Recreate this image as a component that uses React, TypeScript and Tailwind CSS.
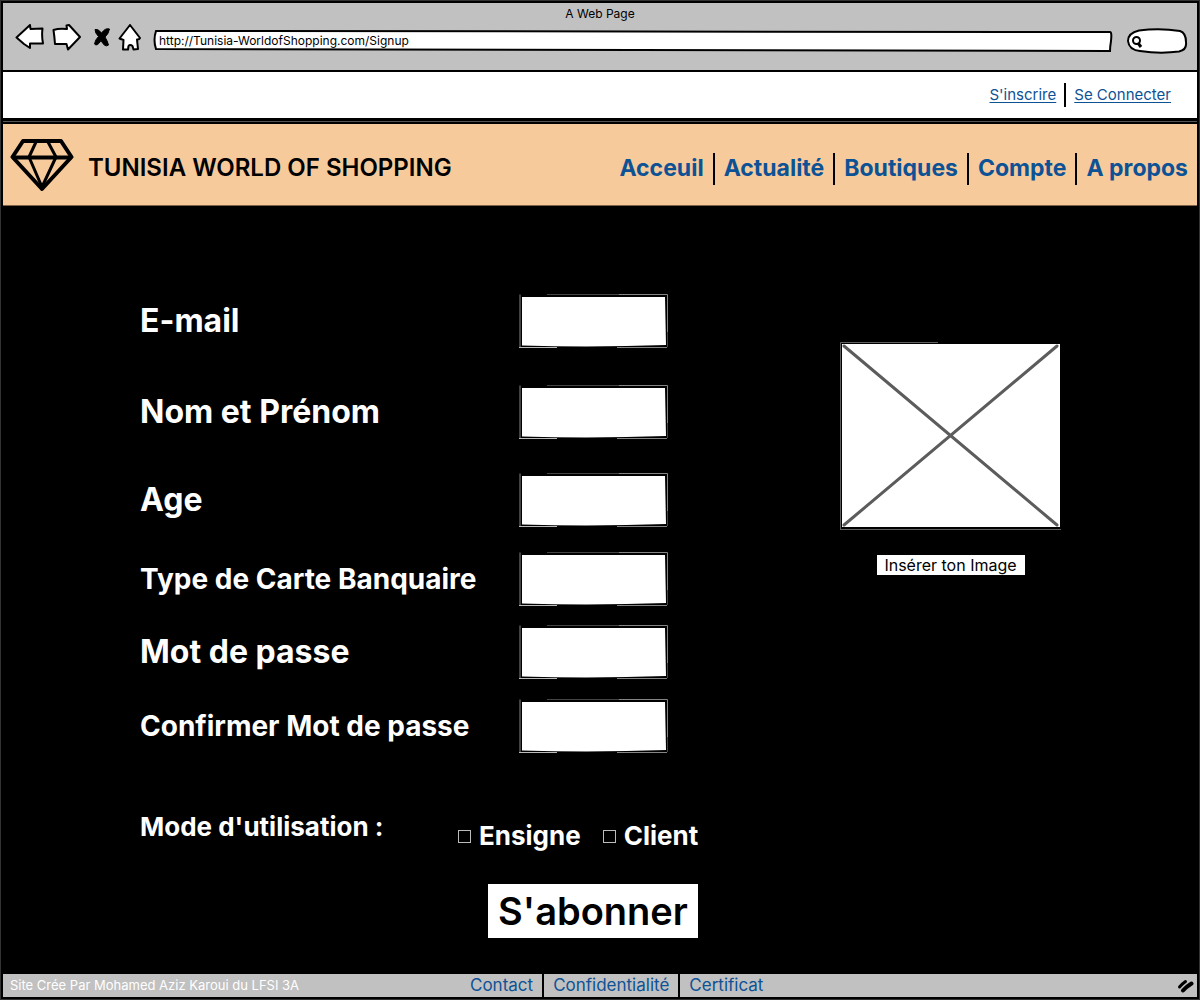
import type { ReactNode } from "react";

const navLinks = ["Acceuil", "Actualité", "Boutiques", "Compte", "A propos"];
const footerLinks = ["Contact", "Confidentialité", "Certificat"];

const fields = [
  { id: "email", label: "E-mail", type: "email", row: "mb-[38px] text-[32px]" },
  { id: "name", label: "Nom et Prénom", type: "text", row: "mb-[35px] text-[32px]" },
  { id: "age", label: "Age", type: "text", row: "mb-[26px] text-[32px]" },
  { id: "card", label: "Type de Carte Banquaire", type: "text", row: "mb-5 text-[28px]" },
  { id: "password", label: "Mot de passe", type: "password", row: "mb-[21px] text-[32px]" },
  { id: "confirm", label: "Confirmer Mot de passe", type: "password", row: "text-[28px]" },
];

function LeftArrow() {
  return (
    <svg width="30" height="28" viewBox="0 0 30 28" fill="white" stroke="black" strokeWidth="2" strokeLinejoin="round" aria-hidden="true">
      <path d="M1.500 13.500 L15 1 L15.500 5 L27.500 4.500 Q26.500 12 28 19.500 L15 19.500 L15 24 L9 20 Z" />
    </svg>
  );
}

function RightArrow() {
  return (
    <svg width="30" height="28" viewBox="0 0 30 28" fill="white" stroke="black" strokeWidth="2" strokeLinejoin="round" aria-hidden="true">
      <path d="M1.500 6 Q7 4 15 5 L14.500 1.500 L17 1 L28 13 L16 25.500 L14.500 20 L3 20 Q2.500 13 1.500 6 Z" />
    </svg>
  );
}

function Cross() {
  return (
    <svg width="18" height="20" viewBox="0 0 18 20" fill="black" stroke="black" strokeWidth="1" strokeLinejoin="round" aria-hidden="true">
      <path d="M2 1.500 Q5 .5 8.500 5 Q12.500 -.5 16.500 1 Q15.500 6 12 9 Q14.500 13 15.500 17 Q12 20 8 12.500 Q4 19 1.500 16 Q2 12 5.500 8.500 Q2 5 2 1.500 Z" />
    </svg>
  );
}

function Home() {
  return (
    <svg width="24" height="28" viewBox="0 0 24 28" fill="white" stroke="black" strokeWidth="2" strokeLinejoin="round" aria-hidden="true">
      <path d="M12 1 L22 14 Q21 16 19 15.500 L20 25 L15.500 25.500 L14.500 22 Q12 20 10.500 22 L10 25.500 L5 25.500 L5.500 16 L1.500 14.500 Z" />
    </svg>
  );
}

function Diamond() {
  return (
    <svg width="64" height="54" viewBox="0 0 64 54" fill="none" stroke="black" strokeWidth="4" strokeLinejoin="round" aria-hidden="true">
      <path d="M13 3 H51 L61.500 19 L32 51 L2.500 19 Z" />
      <path d="M2.500 19.500 H61.500" />
      <path d="M26 4 L19 19 L32 49 L46 19 L38 4" strokeWidth="3" />
    </svg>
  );
}

function Slashes() {
  return (
    <svg width="18" height="14" viewBox="0 0 18 14" fill="none" stroke="black" strokeLinecap="round" aria-hidden="true">
      <path d="M2.500 8 Q5 5 8.500 2.500" strokeWidth="3" />
      <path d="M6 11.500 Q9 8 14.500 4.500" strokeWidth="4" />
    </svg>
  );
}

function FieldFrame() {
  return (
    <svg className="absolute inset-0 h-full w-full" viewBox="0 0 149 54" preserveAspectRatio="none" aria-hidden="true">
      <path d="M3 3 L146 3 L147 51 Q75 53.500 3 51.500 Z" fill="white" />
      <g fill="none" stroke="#858585">
        <path d="M1 .5 V53.500" />
        <path d="M28 .5 H110" stroke="#444444" />
        <path d="M100 .5 H148.500 V38" />
        <path d="M148.500 38 V53" stroke="#444444" />
        <path d="M0 53.500 H38" stroke="#bbbbbb" />
        <path d="M98 53.500 H148" />
      </g>
    </svg>
  );
}

function LinkList({ items, separator }: { items: string[]; separator: string }) {
  return (
    <>
      {items.map((item, i) => (
        <span key={item} className="flex items-center">
          {i > 0 && <span className={separator} />}
          <a href="#" className="hover:underline">{item}</a>
        </span>
      ))}
    </>
  );
}

function ToolButton({ label, children }: { label: string; children: ReactNode }) {
  return (
    <button type="button" aria-label={label} className="shrink-0">
      {children}
    </button>
  );
}

export default function App() {
  return (
    <div className="flex min-h-screen flex-col border border-[#333333] bg-black font-['Inter',sans-serif] text-black">
      <div className="flex grow flex-col border-2 border-black">
        <header className="h-[67px] bg-[#c1c1c1]">
          <p className="pt-[3px] text-center text-xs leading-4">A Web Page</p>
          <div className="flex items-center pr-[9px] pl-3">
            <ToolButton label="Précédent"><LeftArrow /></ToolButton>
            <span className="w-[7px]" />
            <ToolButton label="Suivant"><RightArrow /></ToolButton>
            <span className="w-[11px]" />
            <ToolButton label="Arrêter"><Cross /></ToolButton>
            <span className="w-[7px]" />
            <ToolButton label="Accueil"><Home /></ToolButton>
            <div className="relative mt-1.5 ml-[11px] h-[22px] min-w-0 grow">
              <svg className="absolute inset-0 h-full w-full" viewBox="0 0 960 22" preserveAspectRatio="none" fill="white" stroke="black" strokeWidth="2" aria-hidden="true">
                <path d="M3 1 Q480 2 957 2 Q959 2 958 11 Q957 17 957 21 Q480 20 3 19 Q0 10 3 1 Z" />
              </svg>
              <input
                aria-label="Adresse"
                defaultValue="http://Tunisia-WorldofShopping.com/Signup"
                className="relative block h-5 w-full bg-transparent px-1.5 text-xs outline-none"
              />
            </div>
            <div className="relative mt-1.5 ml-[13px] h-[26px] w-[62px] shrink-0">
              <svg className="absolute inset-0" width="62" height="26" viewBox="0 0 62 26" fill="white" stroke="black" strokeWidth="2" aria-hidden="true">
                <path d="M13 2.500 Q34 0 54 3 Q60 5 60 14 Q61 22 53 23.500 Q34 26 14 23 Q3 22 2 13 Q2 5 13 2.500 Z" />
                <circle cx="10.500" cy="12.500" r="3.500" fill="none" />
                <path d="M12 15 L15 19" strokeWidth="3" />
              </svg>
              <input aria-label="Rechercher" className="relative block h-full w-full bg-transparent pr-3 pl-5 text-xs outline-none" />
            </div>
          </div>
        </header>

        <div className="mt-0.5 flex h-[46px] items-center justify-end bg-white pr-[26px] text-[15px] text-[#0d5295]">
          <a href="#" className="underline underline-offset-2">S'inscrire</a>
          <span className="mx-2 h-6 w-0.5 bg-black" />
          <a href="#" className="underline underline-offset-2">Se Connecter</a>
        </div>

        <div className="mt-[3px] border-t border-[#555555]" />
        <div className="mt-0.5 flex h-[82px] items-center justify-between border-b border-[#7d6248] bg-[#f7ca9c] pr-[9px] pl-[7px]">
          <div className="flex items-center gap-[14px]">
            <Diamond />
            <h1 className="pt-1.5 text-2xl font-semibold whitespace-nowrap">TUNISIA WORLD OF SHOPPING</h1>
          </div>
          <nav className="flex pt-2 text-[23px] font-bold whitespace-nowrap text-[#0d5295]">
            <LinkList items={navLinks} separator="mx-[9px] h-8 w-0.5 bg-black" />
          </nav>
        </div>

        <main className="grow pt-[88px] pb-[35px] pl-[137px] font-bold text-white">
          <form>
            <div className="flex">
              <div>
                {fields.map((f) => (
                  <div key={f.id} className={`flex h-[53px] items-center whitespace-nowrap ${f.row}`}>
                    <label htmlFor={f.id} className="w-[379px] leading-9">{f.label}</label>
                    <span className="relative h-[54px] w-[149px]">
                      <FieldFrame />
                      <input id={f.id} type={f.type} className="relative h-full w-full bg-transparent px-3 text-lg font-normal text-black outline-none" />
                    </span>
                  </div>
                ))}
              </div>
              <figure className="mt-12 ml-[172px] flex w-[221px] shrink-0 flex-col items-center">
                <svg className="w-full" height="188" viewBox="0 0 221 188" role="img" aria-label="Image">
                  <path d="M.5 188 V.5 H98" fill="none" stroke="#606060" />
                  <path d="M0 187.500 H221" fill="none" stroke="#606060" />
                  <path d="M2 2 H220 V185 H2 Z" fill="white" />
                  <path d="M4 4 L217 183 M217 4 L4 183" stroke="#5c5c5c" strokeWidth="3" strokeLinecap="round" />
                </svg>
                <button type="button" className="mt-[25px] h-5 w-[148px] bg-white text-base leading-5 font-normal whitespace-nowrap text-black">
                  Insérer ton Image
                </button>
              </figure>
            </div>

            <fieldset className="mt-[59px] flex h-10 text-[26px] leading-8 whitespace-nowrap">
              <legend className="float-left w-[318px]">Mode d'utilisation :</legend>
              <div className="flex items-center gap-[22px] pt-2.5">
                {["Ensigne", "Client"].map((option) => (
                  <label key={option} className="flex items-center gap-2">
                    <input type="checkbox" className="h-[13px] w-[13px] appearance-none border border-[#bcbcbc] checked:bg-white" />
                    {option}
                  </label>
                ))}
              </div>
            </fieldset>

            <button type="submit" className="mt-[33px] ml-[348px] h-[54px] w-[210px] bg-white text-[38px] leading-[54px] font-semibold text-black">
              S'abonner
            </button>
          </form>
        </main>

        <footer className="grid h-[23px] grid-cols-[460px_1fr_auto] items-center bg-[#c1c1c1] pr-0.5 pl-[7px] whitespace-nowrap">
          <p className="text-[13px] text-white">Site Crée Par Mohamed Aziz Karoui du LFSI 3A</p>
          <nav className="flex text-[17px] leading-[23px] text-[#0d5295]">
            <LinkList items={footerLinks} separator="mx-[9px] h-[23px] w-0.5 bg-black" />
          </nav>
          <Slashes />
        </footer>
      </div>
    </div>
  );
}
